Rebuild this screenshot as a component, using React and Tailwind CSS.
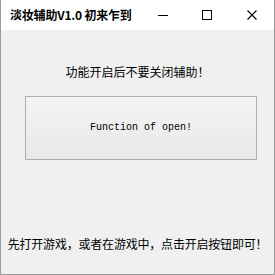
export default function App() {
  return (
    <div className="w-[275px] h-[275px] flex flex-col border-x border-b border-[#9a9a9a] bg-[#f0f0f0] font-['Noto_Sans_CJK_SC',sans-serif] text-black">
      {/* title bar */}
      <div className="h-[30px] shrink-0 bg-white flex items-center">
        <span className="ml-[9px] text-[12px] leading-[12px] font-bold tracking-[-0.2px]">淡妆辅助V1.0 初来乍到</span>
        <div className="ml-auto flex items-center h-full">
          <svg className="w-[10px] h-[10px] mr-[34px]" viewBox="0 0 10 10">
            <line x1="0" y1="5.5" x2="10" y2="5.5" stroke="#000" strokeWidth="1" />
          </svg>
          <svg className="w-[10px] h-[10px] mr-[35px]" viewBox="0 0 10 10">
            <rect x="0.5" y="0.5" width="9" height="9" fill="none" stroke="#000" strokeWidth="1" />
          </svg>
          <svg className="w-[10px] h-[10px] mr-[17px]" viewBox="0 0 10 10">
            <path d="M0.5 0.5 L9.5 9.5 M9.5 0.5 L0.5 9.5" stroke="#000" strokeWidth="1.1" />
          </svg>
        </div>
      </div>

      {/* client area */}
      <div className="flex-1 flex flex-col items-center">
        <p className="mt-[36px] text-[12px] leading-[12px]">功能开启后不要关闭辅助！</p>
        <button className="mt-[18px] self-start ml-[24px] w-[232px] h-[64px] border border-[#adadad] bg-gradient-to-b from-[#f4f4f4] to-[#e8e8e8] flex items-center justify-center font-['Liberation_Mono',monospace] text-[10px] leading-[10px]">
          Function of open!
        </button>
        <p className="mt-[78px] text-[12px] leading-[12px] tracking-[-0.2px]">先打开游戏，或者在游戏中，点击开启按钮即可！</p>
      </div>
    </div>
  );
}
